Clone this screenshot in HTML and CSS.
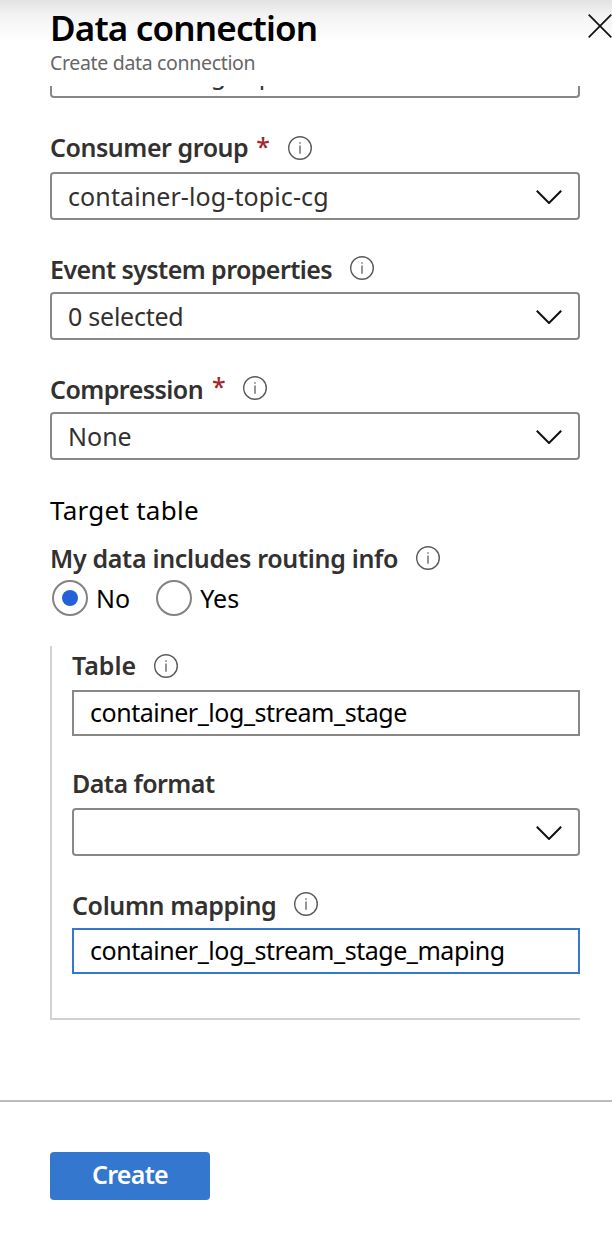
FILE: index.html
```html
<!DOCTYPE html>
<html lang="en">
<head><meta charset="utf-8"><title>Data connection</title><link rel="stylesheet" href="styles.css"></head>
<body>
<svg class="defs" width="0" height="0">
<symbol id="info" viewBox="0 0 24 24"><circle cx="12" cy="12" r="11.3" fill="none" stroke="#5c5a58" stroke-width="1.4"/><path d="M12 9.600v8.200M12 6.200v1.600" stroke="#6a6866" stroke-width="1.4"/></symbol>
<symbol id="chev" viewBox="0 0 26 14"><path d="M.8 .8 13 13 25.200 .8" fill="none" stroke="#111" stroke-width="2"/></symbol>
</svg>
<main class="panel">
<header class="header">
<div><h1 class="title">Data connection</h1><p class="subtitle">Create data connection</p></div>
<svg class="close" viewBox="0 0 24 24"><path d="M.7 .7 23.300 23.300M23.300 .7 .7 23.300" stroke="#111" stroke-width="1.7"/></svg>
</header>
<section class="content">
<div class="clipped"><span class="topic">container-log-topic</span></div>
<div class="field first">
<div class="label"><span class="consumer">Consumer group</span><b class="req">*</b><svg class="info"><use href="#info"/></svg></div>
<div class="select"><span class="topic">container-log-topic-cg</span><svg class="chev"><use href="#chev"/></svg></div>
</div>
<div class="field">
<div class="label"><span class="event">Event system properties</span><svg class="info"><use href="#info"/></svg></div>
<div class="select"><span class="selected">0 selected</span><svg class="chev"><use href="#chev"/></svg></div>
</div>
<div class="field">
<div class="label"><span class="compression">Compression</span><b class="req">*</b><svg class="info"><use href="#info"/></svg></div>
<div class="select"><span>None</span><svg class="chev"><use href="#chev"/></svg></div>
</div>
<h2 class="section">Target table</h2>
<div class="label"><span class="routing">My data includes routing info</span><svg class="info"><use href="#info"/></svg></div>
<div class="radios">
<div class="option"><i class="radio on"></i><span>No</span></div>
<div class="option"><i class="radio"></i><span>Yes</span></div>
</div>
<div class="group">
<div class="label"><span class="table">Table</span><svg class="info"><use href="#info"/></svg></div>
<div class="input">container_log_stream_stage</div>
<div class="label next"><span class="format">Data format</span></div>
<div class="select"><span></span><svg class="chev"><use href="#chev"/></svg></div>
<div class="label next"><span class="mapping">Column mapping</span><svg class="info"><use href="#info"/></svg></div>
<div class="input focus">container_log_stream_stage_maping</div>
</div>
</section>
<footer class="footer"><button class="create">Create</button></footer>
</main>
</body>
</html>
```
FILE: styles.css
```css
*{box-sizing:border-box}
body{margin:0;background:#fff;color:#000;font:25px/32px "Noto Sans",sans-serif}
.defs{display:none}
.panel{height:1240px;overflow:hidden;background:linear-gradient(#e2e2e2,#f3f3f3 15px,#fff 42px)}
.header{height:86px;padding-left:50px;display:flex;justify-content:space-between}
.title{margin:8px 0 0;font-size:35px;font-weight:600;line-height:40px;letter-spacing:-.83px}
.subtitle{margin:0;font-size:19.500px;line-height:30px;letter-spacing:-.33px;color:#666}
.close{width:24px;height:24px;margin-top:14px}
.content{padding:0 32px 0 50px;height:1014px}
.clipped{height:12px;border:2px solid #8a8886;border-top:0;border-radius:0 0 4px 4px;overflow:hidden;display:flex;align-items:flex-end;padding:0 16px 6px;color:#323130}
.topic{letter-spacing:.1px}
.selected{letter-spacing:-.25px}
.label{height:32px;display:flex;align-items:center;font-weight:600;color:#323130;white-space:nowrap}
.info{width:24px;height:24px;margin-left:18px}
.req{color:#a4262c;margin:0 0 4px 8px;font-weight:500}
.consumer{letter-spacing:-.45px;margin-bottom:2px}
.event{letter-spacing:-.57px;margin-top:2px}
.compression{letter-spacing:-.55px;margin-top:2px}
.compression + .req{margin-left:9px;margin-right:-1px}
.routing{letter-spacing:-.32px;margin-bottom:1px}
.table{margin-bottom:2px}
.format{letter-spacing:-.55px;margin-bottom:2px}
.mapping{letter-spacing:-.36px;margin-top:2px}
.field{height:120px}
.first{margin-top:34px}
.select,.input{border:2px solid #8a8886;display:flex;align-items:center;margin-top:8px}
.select{height:48px;border-radius:4px;justify-content:space-between;padding:0 16px;color:#323130}
.input{height:46px;padding:0 16px 2px;letter-spacing:-.47px;background:#fff}
.focus{border-color:#3277d0}
.chev{width:26px;height:14px;margin-top:2px}
.section{font-size:26px;font-weight:400;letter-spacing:.28px;margin:2px 0 16px}
.radios{display:flex;height:48px;align-items:center;gap:26px;padding-left:2px}
.option{display:flex;align-items:center;gap:8px}
.radio{display:flex;align-items:center;justify-content:center;width:36px;height:36px;border:2px solid #858382;border-radius:50%;background:#fff}
.on::after{content:"";width:16px;height:16px;border-radius:50%;background:#2460d8}
.group{border:solid #d2d2d2;border-width:0 0 2px 2px;height:374px;padding:4px 0 0 20px;margin-top:24px}
.next{margin-top:32px}
.footer{border-top:2px solid #bbb;height:140px;padding:50px}
.create{display:block;width:160px;height:48px;border:0;border-radius:4px;padding:0 0 4px;background:#3477cf;color:#fff;font:600 25px "Noto Sans",sans-serif;letter-spacing:-.7px}
```
